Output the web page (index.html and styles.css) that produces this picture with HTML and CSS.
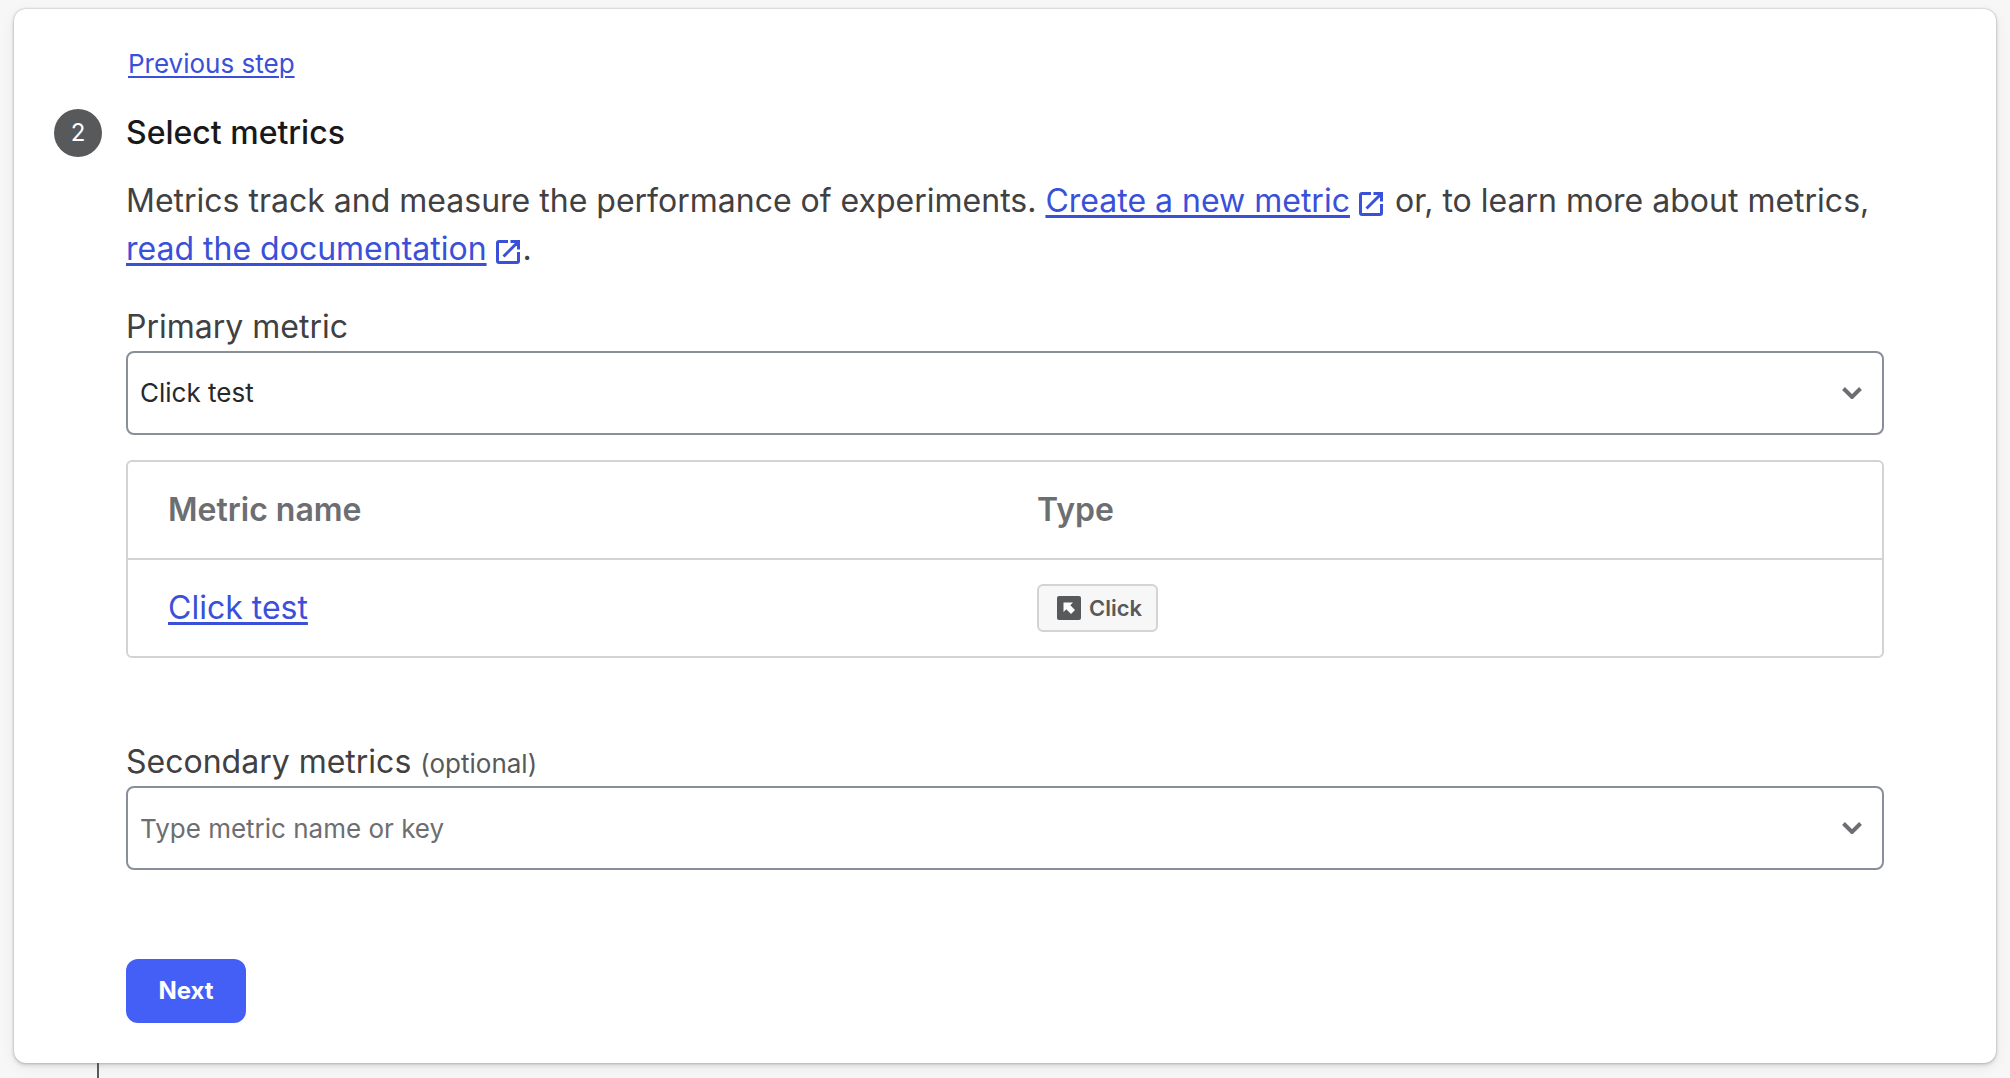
FILE: index.html
```html
<!DOCTYPE html>
<html lang="en">
<head>
<meta charset="utf-8">
<meta name="viewport" content="width=device-width, initial-scale=1">
<title>Select metrics</title>
<link rel="stylesheet" href="styles.css">
</head>
<body>
<main class="card">
  <a class="previous" href="#">Previous step</a>
  <div class="step-badge">2</div>
  <h2 class="step-title">Select metrics</h2>
  <form class="step-body">
    <p class="description">Metrics track and measure the performance of experiments. <a href="#">Create a new metric</a><svg class="external" viewBox="0 0 24 24" aria-hidden="true"><path d="M12 1.500H3Q1.500 1.500 1.500 3V21Q1.500 22.500 3 22.500H21Q22.500 22.500 22.500 21V12M14.500 1.500H22.500V9.500M22 2L7.500 16.500"/></svg> or, to learn more about metrics, <a href="#">read the documentation</a><svg class="external" viewBox="0 0 24 24" aria-hidden="true"><path d="M12 1.500H3Q1.500 1.500 1.500 3V21Q1.500 22.500 3 22.500H21Q22.500 22.500 22.500 21V12M14.500 1.500H22.500V9.500M22 2L7.500 16.500"/></svg>.</p>

    <label class="field-label" for="primary">Primary metric</label>
    <div class="field">
      <select id="primary" class="control"><option>Click test</option></select>
      <svg class="chevron" viewBox="0 0 20 12" aria-hidden="true"><path d="M1.500 1.500L10 10L18.500 1.500"/></svg>
    </div>

    <table class="metrics">
      <thead><tr><th>Metric name</th><th>Type</th></tr></thead>
      <tbody><tr>
        <td><a href="#">Click test</a></td>
        <td><span class="chip"><svg class="chip-icon" viewBox="0 0 24 24" aria-hidden="true"><rect width="24" height="24" rx="2"/><path d="M6.500 6.500H16L13.300 9.200L18 14L14 18L9.300 13.200L6.500 16Z"/></svg>Click</span></td>
      </tr></tbody>
    </table>

    <label class="field-label" for="secondary">Secondary metrics <span class="optional">(optional)</span></label>
    <div class="field">
      <input id="secondary" class="control" type="text" placeholder="Type metric name or key">
      <svg class="chevron" viewBox="0 0 20 12" aria-hidden="true"><path d="M1.500 1.500L10 10L18.500 1.500"/></svg>
    </div>

    <button class="next" type="button">Next</button>
  </form>
</main>
<div class="connector"></div>
</body>
</html>
```
FILE: styles.css
```css
* {
  box-sizing: border-box;
}

body {
  margin: 0;
  min-height: 100vh;
  display: flex;
  flex-direction: column;
  background: #f7f7f7;
  color: #414042;
  font: 400 32px/48px Inter, "Liberation Sans", sans-serif;
}

a {
  color: #3a50d9;
  text-decoration: underline;
  text-decoration-thickness: 3px;
  text-underline-offset: 3px;
}

.card {
  margin: 9px 14px 0;
  padding: 36px 112px 40px 40px;
  display: grid;
  grid-template-columns: 48px minmax(0, 1fr);
  column-gap: 24px;
  align-items: center;
  background: #fff;
  border-radius: 12px;
  box-shadow: 0 0 2px rgba(0, 0, 0, 0.3), 0 2px 4px rgba(0, 0, 0, 0.16), 0 4px 16px rgba(0, 0, 0, 0.06);
}

.previous {
  grid-column: 2;
  justify-self: start;
  margin: 0 0 26px 2px;
  font-size: 26px;
  line-height: 38px;
  text-decoration-thickness: 2px;
}

.step-badge {
  height: 48px;
  border-radius: 50%;
  background: #58595b;
  color: #fff;
  font-size: 24px;
  text-align: center;
}

.step-title {
  margin: 0;
  color: #191919;
  font-size: 32px;
  font-weight: 500;
}

.step-body {
  grid-column: 2;
}

.description {
  margin: 20px 0 30px;
}

.external {
  width: 24px;
  height: 24px;
  margin: 0 3px 0 9px;
  vertical-align: -4px;
  fill: none;
  stroke: #3a50d9;
  stroke-width: 3;
}

.field-label {
  display: block;
}

.optional {
  color: #58595b;
  font-size: 26px;
  line-height: 32px;
}

.field {
  display: grid;
  align-items: center;
}

.control {
  grid-area: 1 / 1;
  width: 100%;
  height: 84px;
  padding: 0 64px 0 12px;
  appearance: none;
  border: 2px solid #898e9b;
  border-radius: 8px;
  background: #fff;
  color: #282828;
  font: inherit;
  font-size: 26px;
}

.control::placeholder {
  color: #6d6e71;
  opacity: 1;
}

.chevron {
  grid-area: 1 / 1;
  justify-self: end;
  width: 20px;
  height: 12px;
  margin-right: 22px;
  fill: none;
  stroke: #6d6e71;
  stroke-width: 4;
  pointer-events: none;
}

.metrics {
  width: 100%;
  margin: 25px 0 80px;
  table-layout: fixed;
  border: 2px solid #d1d3d4;
  border-radius: 6px;
  border-spacing: 0;
}

.metrics th,
.metrics td {
  height: 96px;
  padding: 0 32px;
  text-align: left;
}

.metrics th:first-child,
.metrics td:first-child {
  padding-left: 40px;
}

.metrics th {
  height: 98px;
  border-bottom: 2px solid #d1d3d4;
  color: #6d6e71;
  font-weight: 600;
}

.chip {
  display: flex;
  width: max-content;
  align-items: center;
  gap: 8px;
  height: 48px;
  padding: 0 14px 0 18px;
  border: 2px solid #d1d3d4;
  border-radius: 6px;
  background: #f7f7f7;
  color: #58595b;
  font-size: 22px;
  font-weight: 600;
}

.chip-icon {
  width: 24px;
  height: 24px;
  fill: #58595b;
}

.chip-icon path {
  fill: #fff;
}

.next {
  display: block;
  min-width: 120px;
  height: 64px;
  margin-top: 89px;
  padding: 0 30px;
  border: 0;
  border-radius: 12px;
  background: #445ff6;
  color: #fff;
  font: inherit;
  font-size: 24px;
  font-weight: 700;
}

.connector {
  flex: 1;
  width: 2px;
  margin-left: 97px;
  background: #58595b;
}
```
